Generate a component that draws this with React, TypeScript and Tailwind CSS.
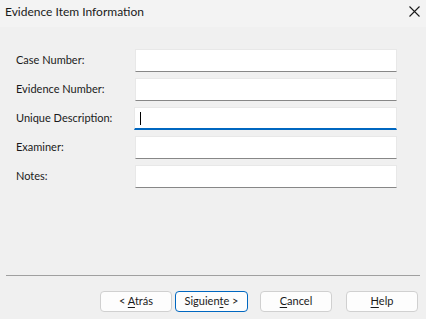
const FIELDS = ['Case Number:', 'Evidence Number:', 'Unique Description:', 'Examiner:', 'Notes:'];

function Field({ label, focused }: { label: string; focused?: boolean }) {
  return (
    <div className="flex items-center h-[23px]">
      <span className="w-[119px] text-[11px] text-[#1a1a1a]">{label}</span>
      {focused ? (
        <div className="w-[263px] h-[23px] -ml-[1px] bg-white border border-[#e8e8e8] border-b-2 border-b-[#0067c0] flex items-center pl-[5px]">
          <div className="w-px h-[13px] bg-black" />
        </div>
      ) : (
        <div className="w-[262px] h-[23px] bg-white border border-[#e8e8e8] border-b-[#878787]" />
      )}
    </div>
  );
}

function Btn({ pre, u, post, primary, className }: { pre: string; u: string; post: string; primary?: boolean; className?: string }) {
  return (
    <button
      className={`h-[21px] rounded-[4px] bg-[#fdfdfd] text-[11px] text-[#1a1a1a] flex items-center justify-center border ${
        primary ? 'border-[#0067c0]' : 'border-[#d0d0d0]'
      } ${className ?? ''}`}
    >
      <span className="whitespace-pre">
        {pre}
        <u className="underline-offset-2">{u}</u>
        {post}
      </span>
    </button>
  );
}

export default function App() {
  return (
    <div
      className="w-[426px] h-[319px] bg-[#f0f0f0] flex flex-col overflow-hidden"
      style={{ fontFamily: 'Lato, "Noto Sans", sans-serif' }}
    >
      <div className="h-[27px] bg-[#f3f3f3] flex items-center justify-between pl-[5px] pr-[6px] pb-[4px]">
        <span className="text-[12px] text-[#1a1a1a]">Evidence Item Information</span>
        <svg width="11" height="11" viewBox="0 0 11 11">
          <path d="M0.5 0.5 L10.5 10.5 M10.5 0.5 L0.5 10.5" stroke="#1a1a1a" strokeWidth="1.1" />
        </svg>
      </div>

      <div className="flex flex-col gap-[6px] pt-[22px] pl-[16px]">
        {FIELDS.map((f) => (
          <Field key={f} label={f} focused={f === 'Unique Description:'} />
        ))}
      </div>

      <div className="flex-1" />

      <div className="mx-[6px] h-px bg-[#a0a0a0]" />

      <div className="flex pl-[100px] pt-[15px] pb-[7px]">
        <Btn pre="< " u="A" post="trás" className="w-[72px]" />
        <Btn pre="Siguien" u="t" post="e >" primary className="w-[73px] ml-[3px]" />
        <Btn pre="" u="C" post="ancel" className="w-[72px] ml-[12px]" />
        <Btn pre="" u="H" post="elp" className="w-[72px] ml-[14px]" />
      </div>
    </div>
  );
}
